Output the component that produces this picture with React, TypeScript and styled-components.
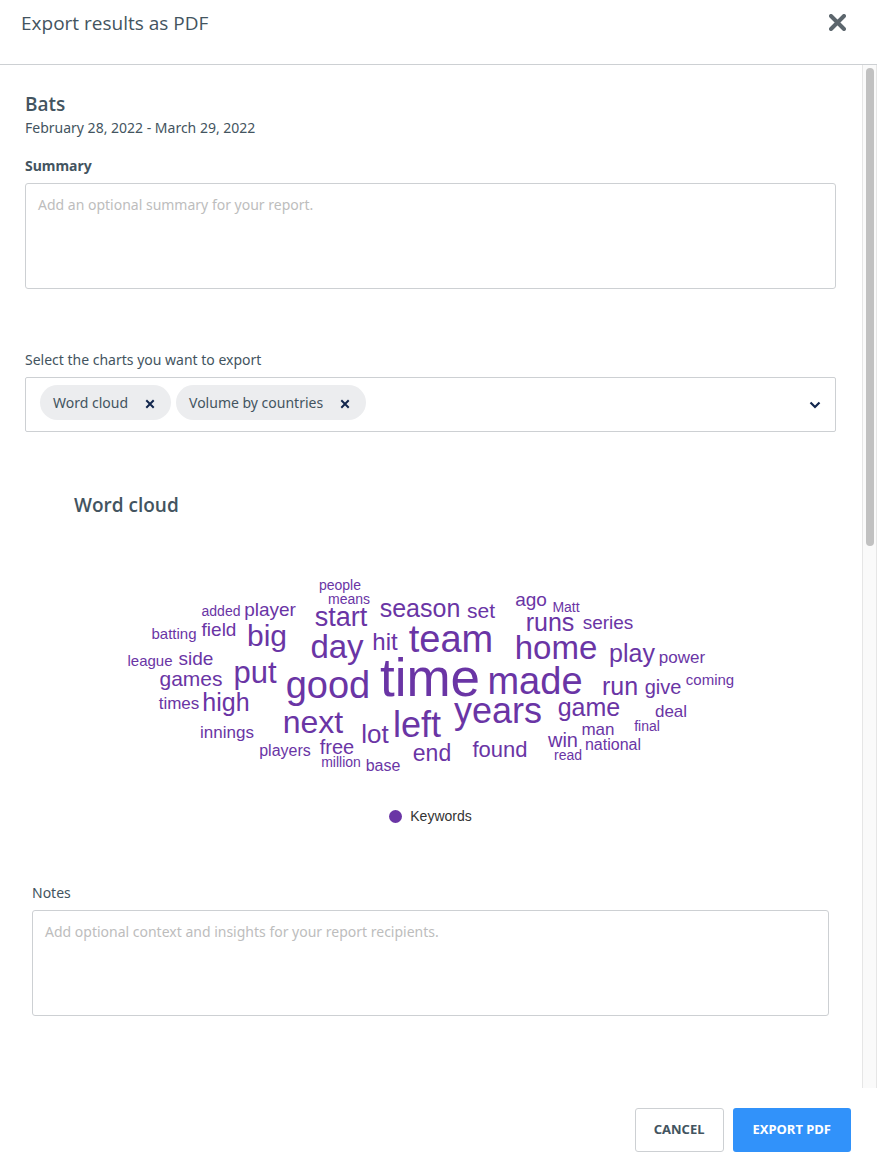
import React from "react";
import styled, { createGlobalStyle } from "styled-components";

const color = {
  text: "#435460",
  line: "#cdd0d3",
  placeholder: "#bdbdbd",
  chip: "#ecedef",
  navy: "#12264d",
  blue: "#3192fa",
  purple: "#6a35a5",
};

const GlobalStyle = createGlobalStyle`
  *, *::before, *::after { box-sizing: border-box; }
  body {
    margin: 0;
    background: #fff;
    color: ${color.text};
    font: 14px/24px "Noto Sans", "Open Sans", sans-serif;
  }
  button, textarea { font-family: inherit; }
`;

const Dialog = styled.div`
  display: flex;
  flex-direction: column;
  height: 100vh;
`;

const Header = styled.header`
  display: flex;
  justify-content: space-between;
  align-items: flex-start;
  padding: 11px 31px 29px 21px;
  border-bottom: 1px solid ${color.line};
`;

const Title = styled.h1`
  margin: 0;
  font-family: "Open Sans", sans-serif;
  font-size: 19px;
  line-height: 24px;
  font-weight: 400;
`;

const IconButton = styled.button`
  display: flex;
  align-items: center;
  justify-content: center;
  padding: 0;
  border: 0;
  background: none;
  cursor: pointer;
`;

const CloseButton = styled(IconButton)`
  height: 23px;
  color: #5c666d;
`;

const Main = styled.div`
  display: flex;
  flex: 1;
  min-height: 0;
`;

const Content = styled.main`
  flex: 1;
  min-width: 0;
  padding: 27px 26px 27px 25px;
  overflow-y: auto;
  scrollbar-width: none;
`;

const Track = styled.div`
  flex: none;
  width: 15px;
  padding: 3px;
  border: solid #e6e6e6;
  border-width: 0 1px;
  background: #fafafa;
`;

const Thumb = styled.div`
  width: 8px;
  height: 47%;
  border-radius: 4px;
  background: #c1c1c1;
`;

const Heading = styled.h2`
  margin: 0;
  font-family: "Open Sans", sans-serif;
  font-size: 19px;
  line-height: 24px;
  font-weight: 600;
`;

const DateRange = styled.p`
  margin: 0 0 14px;
`;

const Field = styled.div`
  display: flex;
  flex-direction: column;
  gap: 5px;
`;

const Label = styled.label<{ $strong?: boolean }>`
  font-weight: ${(p) => (p.$strong ? 700 : 400)};
`;

const TextArea = styled.textarea`
  display: block;
  width: 100%;
  height: 106px;
  padding: 9px 12px;
  border: 1px solid ${color.line};
  border-radius: 3px;
  color: ${color.text};
  font-size: 14px;
  line-height: 24px;
  resize: none;
  &::placeholder {
    color: ${color.placeholder};
    opacity: 1;
  }
`;

const ChartPicker = styled(Field)`
  margin-top: 59px;
`;

const PickerBox = styled.div`
  display: flex;
  align-items: center;
  justify-content: space-between;
  padding: 7px 14px 11px;
  border: 1px solid ${color.line};
  border-radius: 2px;
`;

const Chips = styled.div`
  display: flex;
  flex-wrap: wrap;
  gap: 5px;
`;

const Chip = styled.span`
  display: flex;
  align-items: center;
  gap: 17px;
  height: 35px;
  padding: 0 16px 0 13px;
  border-radius: 18px;
  background: ${color.chip};
`;

const ChipRemove = styled(IconButton)`
  padding-top: 3px;
  color: ${color.navy};
`;

const PickerToggle = styled(IconButton)`
  padding-top: 4px;
  color: ${color.navy};
`;

const ChartSection = styled.section`
  margin-top: 61px;
  padding: 0 7px;
`;

const ChartTitle = styled(Heading)`
  margin-bottom: 53px;
  padding-left: 42px;
`;

const Cloud = styled.svg`
  display: block;
  width: 641px;
  max-width: 100%;
  margin: 0 auto;
  fill: ${color.purple};
  font-family: "Liberation Sans", Arial, sans-serif;
  text-anchor: middle;
`;

const Legend = styled.div`
  display: flex;
  align-items: center;
  justify-content: center;
  gap: 8px;
  margin: 24px 0 53px;
  color: #333;
  font-family: "Liberation Sans", Arial, sans-serif;
`;

const LegendDot = styled.span`
  width: 13px;
  height: 13px;
  border-radius: 50%;
  background: ${color.purple};
`;

const Footer = styled.footer`
  display: flex;
  justify-content: flex-end;
  gap: 9px;
  padding: 20px 26px 14px;
`;

const Action = styled.button<{ $primary?: boolean }>`
  height: 44px;
  padding: ${(p) => (p.$primary ? "0 20px 2px" : "0 18px 2px")};
  border: ${(p) => (p.$primary ? "0" : `1px solid ${color.line}`)};
  border-radius: 3px;
  background: ${(p) => (p.$primary ? color.blue : "#fff")};
  color: ${(p) => (p.$primary ? "#fff" : color.text)};
  font-size: 13px;
  font-weight: 700;
  cursor: pointer;
`;

const Cross = ({ size, stroke, round }: { size: number; stroke: number; round?: boolean }) => (
  <svg width={size} height={size} viewBox={`0 0 ${size} ${size}`} aria-hidden="true">
    <path
      d={`M2 2L${size - 2} ${size - 2}M${size - 2} 2L2 ${size - 2}`}
      stroke="currentColor"
      strokeWidth={stroke}
      strokeLinecap={round ? "round" : "square"}
      fill="none"
    />
  </svg>
);

// [word, centre x, baseline y, font size], in chart units
type Word = [string, number, number, number];

const words: Word[] = [
  ["people", 230, 20, 14],
  ["means", 239, 34, 14],
  ["start", 231, 56, 27],
  ["season", 310, 47, 25],
  ["set", 371, 48, 21],
  ["ago", 421, 36, 19],
  ["Matt", 456, 42, 14],
  ["added", 111, 46, 14],
  ["player", 160, 46, 19],
  ["batting", 64, 69, 15],
  ["field", 109, 66, 19],
  ["big", 157, 76, 30],
  ["day", 227, 88, 33],
  ["hit", 275, 80, 24],
  ["team", 341, 82, 38],
  ["runs", 440, 61, 25],
  ["series", 498, 59, 19],
  ["home", 446, 89, 33],
  ["play", 522, 92, 25],
  ["power", 572, 93, 17],
  ["league", 40, 96, 15],
  ["side", 86, 95, 19],
  ["games", 81, 116, 21],
  ["put", 145, 113, 31],
  ["good", 218, 128, 38],
  ["time", 320, 126, 53],
  ["made", 425, 124, 38],
  ["run", 510, 125, 25],
  ["give", 553, 124, 20],
  ["coming", 600, 115, 15],
  ["times", 69, 139, 17],
  ["high", 116, 141, 25],
  ["years", 388, 153, 36],
  ["game", 479, 146, 25],
  ["deal", 561, 147, 17],
  ["next", 203, 163, 32],
  ["left", 307, 167, 36],
  ["lot", 265, 173, 26],
  ["man", 488, 165, 17],
  ["final", 537, 161, 14],
  ["innings", 117, 168, 17],
  ["players", 175, 186, 16],
  ["free", 227, 184, 20],
  ["million", 231, 197, 14],
  ["base", 273, 201, 16],
  ["end", 322, 191, 23],
  ["found", 390, 187, 22],
  ["win", 453, 177, 20],
  ["national", 503, 180, 16],
  ["read", 458, 190, 14],
];

export default function App() {
  return (
    <>
      <GlobalStyle />
      <Dialog role="dialog" aria-labelledby="dialog-title">
        <Header>
          <Title id="dialog-title">Export results as PDF</Title>
          <CloseButton type="button" aria-label="Close">
            <Cross size={17} stroke={4} round />
          </CloseButton>
        </Header>
        <Main>
          <Content>
            <Heading>Bats</Heading>
            <DateRange>February 28, 2022 - March 29, 2022</DateRange>
            <Field>
              <Label $strong htmlFor="summary">Summary</Label>
              <TextArea id="summary" placeholder="Add an optional summary for your report." />
            </Field>
            <ChartPicker>
              <Label htmlFor="charts">Select the charts you want to export</Label>
              <PickerBox>
                <Chips>
                  {["Word cloud", "Volume by countries"].map((name) => (
                    <Chip key={name}>
                      {name}
                      <ChipRemove type="button" aria-label={`Remove ${name}`}>
                        <Cross size={10} stroke={2} />
                      </ChipRemove>
                    </Chip>
                  ))}
                </Chips>
                <PickerToggle id="charts" type="button" aria-haspopup="listbox">
                  <svg width="12" height="8" viewBox="0 0 12 8" aria-hidden="true">
                    <path d="M1.5 1.5L6 6L10.5 1.5" fill="none" stroke="currentColor" strokeWidth="2.2" />
                  </svg>
                </PickerToggle>
              </PickerBox>
            </ChartPicker>
            <ChartSection>
              <ChartTitle>Word cloud</ChartTitle>
              <Cloud viewBox="0 0 641 210" role="img" aria-label="Word cloud of keywords">
                {words.map(([word, x, y, size]) => (
                  <text key={word} x={x} y={y} fontSize={size}>{word}</text>
                ))}
              </Cloud>
              <Legend>
                <LegendDot />
                Keywords
              </Legend>
              <Field>
                <Label htmlFor="notes">Notes</Label>
                <TextArea
                  id="notes"
                  placeholder="Add optional context and insights for your report recipients."
                />
              </Field>
            </ChartSection>
          </Content>
          <Track>
            <Thumb />
          </Track>
        </Main>
        <Footer>
          <Action type="button">CANCEL</Action>
          <Action type="button" $primary>EXPORT PDF</Action>
        </Footer>
      </Dialog>
    </>
  );
}
